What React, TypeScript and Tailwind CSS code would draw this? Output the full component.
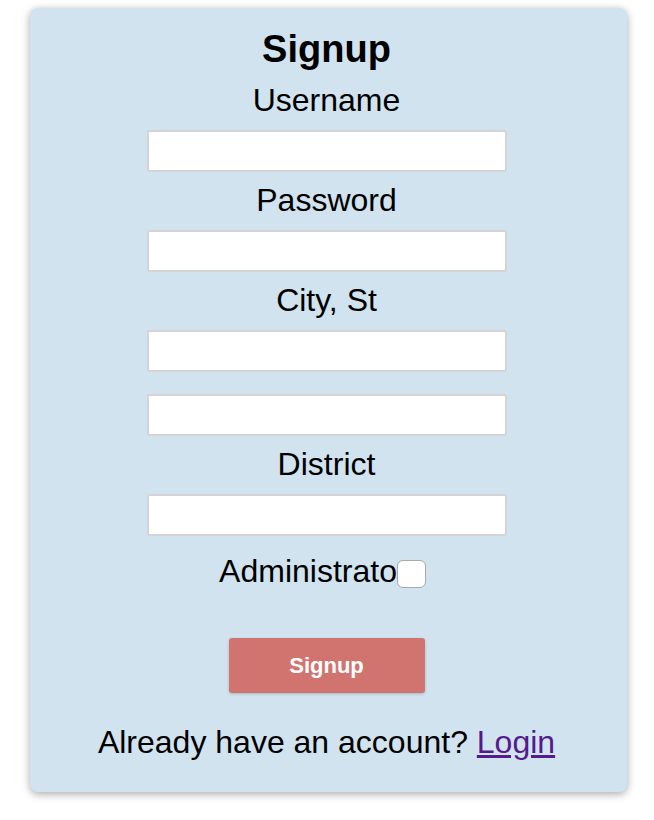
import React from "react";

const font = { fontFamily: '"Liberation Sans", Arial, Helvetica, sans-serif' };

function Label({ children, className = "" }: { children: React.ReactNode; className?: string }) {
  return <div className={"text-[32px] leading-[36px] text-black " + className}>{children}</div>;
}

function Field({ className = "" }: { className?: string }) {
  return (
    <input
      type="text"
      className={
        "block w-[360px] h-[42px] bg-white border-2 border-[#d4d4d4] rounded-[3px] outline-none px-2 text-[20px] " +
        className
      }
    />
  );
}

export default function App() {
  return (
    <div className="w-[654px] h-[820px] bg-white pt-[8px]" style={font}>
      <div className="ml-[30px] w-[597px] h-[784px] bg-[#d0e3ef] rounded-[8px] shadow-[0_2px_8px_rgba(0,0,0,0.35)] pt-[20px] pr-[4px] flex flex-col items-center">
        <h1 className="text-[38px] leading-[42px] font-bold text-black">Signup</h1>
        <Label className="mt-[12px]">Username</Label>
        <Field className="mt-[12px]" />
        <Label className="mt-[10px]">Password</Label>
        <Field className="mt-[12px]" />
        <Label className="mt-[10px]">City, St</Label>
        <Field className="mt-[12px]" />
        <Field className="mt-[22px]" />
        <Label className="mt-[10px]">District</Label>
        <Field className="mt-[12px]" />
        <div className="mt-[17px] mr-[8px] flex items-start">
          <span className="text-[32px] leading-[36px] text-black">Administrato</span>
          <span className="mt-[7px] w-[29px] h-[28px] bg-white border border-[#a9a9a9] rounded-[6px] block" />
        </div>
        <button className="mt-[49px] w-[196px] h-[55px] bg-[#d17470] rounded-[3px] shadow-[0_1px_3px_rgba(0,0,0,0.2)] text-white font-bold text-[22px]">
          Signup
        </button>
        <div className="mt-[31px] text-[32px] leading-[36px] text-black">
          Already have an account?{" "}
          <a href="#" className="text-[#551a8b] underline">
            Login
          </a>
        </div>
      </div>
    </div>
  );
}
